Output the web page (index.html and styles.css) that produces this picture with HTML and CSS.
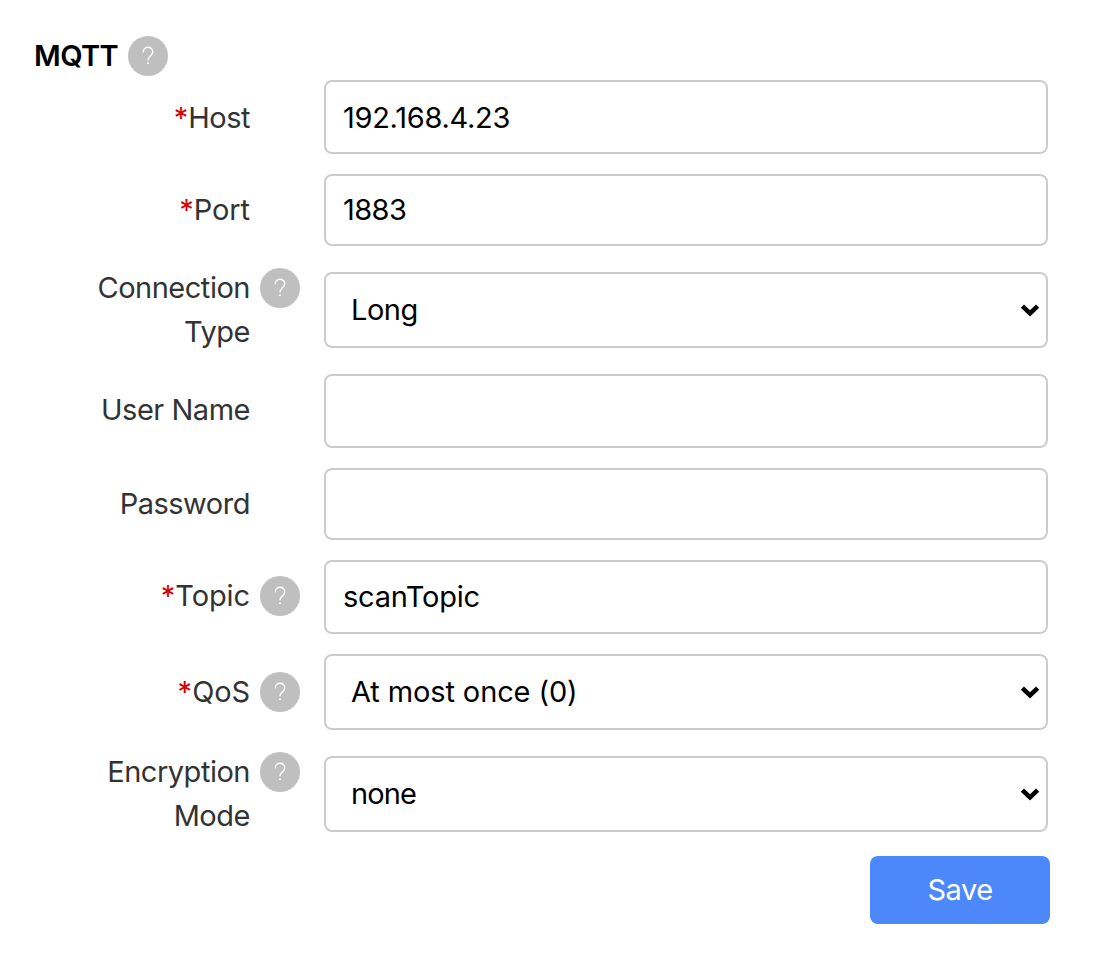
FILE: index.html
```html
<!DOCTYPE html>
<html lang="en">
<head>
<meta charset="utf-8">
<title>MQTT</title>
<link rel="stylesheet" href="styles.css">
</head>
<body>
<form class="settings">
  <div class="heading"><h1 class="title">MQTT</h1><span class="help"><svg viewBox="0 0 40 40"><path d="M15.2 16.4C15.2 9.6 24.8 9.6 24.8 16C24.8 19.8 20 19.8 20 24.3"/><path d="M19.1 27.2h1.8"/></svg></span></div>
  <div class="row"><label class="label t-host" for="host"><span class="star">*</span>Host</label><input class="field t-ip" id="host" value="192.168.4.23"></div>
  <div class="row short"><label class="label t-port" for="port"><span class="star">*</span>Port</label><input class="field t-num raised" id="port" value="1883"></div>
  <div class="row choice spaced"><label class="label double" for="conn">Connection<br>Type</label><span class="help first-line"><svg viewBox="0 0 40 40"><path d="M15.2 16.4C15.2 9.6 24.8 9.6 24.8 16C24.8 19.8 20 19.8 20 24.3"/><path d="M19.1 27.2h1.8"/></svg></span><div class="select"><select class="field t-long" id="conn"><option>Long</option></select><svg class="chevron" viewBox="0 0 20 14"><path d="M2.4 2.2L10 9.4L17.6 2.2"/></svg></div></div>
  <div class="row"><label class="label lifted" for="user">User Name</label><input class="field" id="user"></div>
  <div class="row short"><label class="label" for="pass">Password</label><input class="field" id="pass" type="password"></div>
  <div class="row"><label class="label t-topic lifted" for="topic"><span class="star">*</span>Topic</label><span class="help lifted"><svg viewBox="0 0 40 40"><path d="M15.2 16.4C15.2 9.6 24.8 9.6 24.8 16C24.8 19.8 20 19.8 20 24.3"/><path d="M19.1 27.2h1.8"/></svg></span><input class="field t-scan raised" id="topic" value="scanTopic"></div>
  <div class="row choice"><label class="label t-qos" for="qos"><span class="star">*</span>QoS</label><span class="help"><svg viewBox="0 0 40 40"><path d="M15.2 16.4C15.2 9.6 24.8 9.6 24.8 16C24.8 19.8 20 19.8 20 24.3"/><path d="M19.1 27.2h1.8"/></svg></span><div class="select"><select class="field t-most" id="qos"><option>At most once (0)</option></select><svg class="chevron" viewBox="0 0 20 14"><path d="M2.4 2.2L10 9.4L17.6 2.2"/></svg></div></div>
  <div class="row choice last"><label class="label double" for="enc">Encryption<br>Mode</label><span class="help first-line"><svg viewBox="0 0 40 40"><path d="M15.2 16.4C15.2 9.6 24.8 9.6 24.8 16C24.8 19.8 20 19.8 20 24.3"/><path d="M19.1 27.2h1.8"/></svg></span><div class="select"><select class="field t-none" id="enc"><option>none</option></select><svg class="chevron" viewBox="0 0 20 14"><path d="M2.4 2.2L10 9.4L17.6 2.2"/></svg></div></div>
  <div class="actions"><button class="save" type="button">Save</button></div>
</form>
</body>
</html>
```

FILE: styles.css
```css
* { box-sizing: border-box; }
body { margin: 0; background: #fff; font-family: Inter, "Liberation Sans", sans-serif; font-size: 29px; color: #333; }
.settings { display: flex; flex-direction: column; width: 1100px; padding: 34px 50px 0 34px; }
.heading { display: flex; align-items: center; gap: 10px; height: 44px; margin-bottom: 2px; }
.title { margin: 0; width: 84px; font-size: 29px; font-weight: 600; line-height: 44px; letter-spacing: -0.6px; color: #000; white-space: nowrap; }
.help { display: block; width: 40px; height: 40px; border-radius: 50%; background: #bfbfbf; }
.help svg { display: block; width: 40px; height: 40px; fill: none; stroke: #fff; stroke-width: 1.4; }

.row { display: grid; grid-template-columns: 216px 74px 724px; grid-template-rows: 100%; height: 74px; margin-bottom: 20px; align-items: center; }
.row.short { height: 72px; }
.row.choice { height: 76px; margin-bottom: 26px; }
.row.spaced { margin-top: 6px; }
.row.last { margin-bottom: 24px; }
.label { grid-column: 1; line-height: 44px; letter-spacing: -0.48px; text-align: right; white-space: nowrap; }
.label.double { margin: -6px 0; }
.row .help { grid-column: 2; margin-left: 10px; }
.row .help.first-line { margin-bottom: 44px; }
.row .lifted { margin-bottom: 2px; }
.star { color: #d90000; letter-spacing: 0; }

.field, .select { grid-column: 3; width: 724px; height: 100%; }
.field { padding: 0 17px; border: 2px solid #ccc; border-radius: 8px; background: #fff; color: #000; font: inherit; appearance: none; outline: none; }
.field.raised { padding-bottom: 2px; }
.select { display: grid; position: relative; }
.select .field { padding-left: 25px; padding-bottom: 2px; }
.chevron { position: absolute; right: 8px; top: 32px; width: 20px; height: 14px; fill: none; stroke: #000; stroke-width: 4.6; pointer-events: none; }

.t-host { padding-top: 2px; }
.t-port { letter-spacing: -0.1px; }
.t-topic, .t-qos { letter-spacing: -0.1px; }
.t-ip { letter-spacing: -0.28px; }
.t-num { letter-spacing: -0.6px; }
.t-long { letter-spacing: -0.5px; }
.t-scan { letter-spacing: -0.2px; }
.t-most { letter-spacing: -0.12px; }
.t-none { letter-spacing: -0.9px; }

.actions { display: flex; justify-content: flex-end; }
.save { width: 180px; height: 68px; padding: 0 0 2px; border: 0; border-radius: 8px; background: #4d88fb; color: #fff; font: inherit; letter-spacing: -0.5px; }
```
